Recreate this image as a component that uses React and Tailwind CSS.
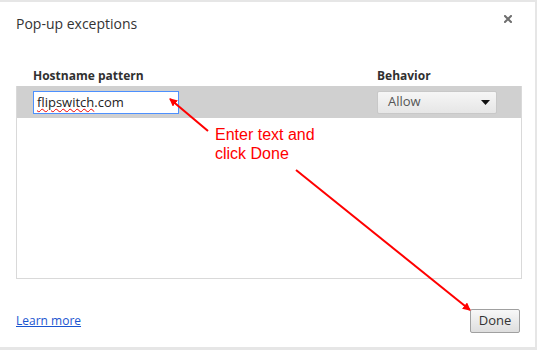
import { useState } from 'react';

// Small down-pointing caret used in the select box
const Caret = () => (
  <svg width="9" height="5" viewBox="0 0 9 5" className="block">
    <path d="M0 0 L9 0 L4.5 5 Z" fill="#111" />
  </svg>
);

const CloseX = () => (
  <svg width="8" height="8" viewBox="0 0 8 8" className="block">
    <path d="M1 1 L7 7 M7 1 L1 7" stroke="#6f6f6f" strokeWidth="2" strokeLinecap="square" />
  </svg>
);

function App() {
  const [behavior] = useState('Allow');

  return (
    <div className="relative w-[537px] h-[350px] bg-[#e6e6e6] overflow-hidden" style={{ fontFamily: '"Open Sans", "Noto Sans", sans-serif' }}>
      <div className="absolute left-0 top-[2px] w-[535px] h-[345px] bg-white flex flex-col">
        {/* Title bar */}
        <div className="flex items-start justify-between pl-4 pr-[23px] pt-[12px]">
          <h1 className="text-[14px] text-[#333] leading-[20px]">Pop-up exceptions</h1>
          <button className="mt-[1px]"><CloseX /></button>
        </div>

        {/* Column headers */}
        <div className="flex mt-[34px] text-[12px] font-bold text-[#303030] leading-[16px]">
          <div className="w-[377px] pl-[33px]">Hostname pattern</div>
          <div>Behavior</div>
        </div>

        {/* List */}
        <div className="ml-4 mt-[2px] w-[506px] h-[193px] border-x border-b border-[#d9d9d9]">
          <div className="flex items-center h-[32px] bg-[#d0d0d0]">
            <div className="w-[360px] pl-[16px]">
              <div className="w-[146px] h-[23px] px-[3px] flex items-center bg-white border border-[#4d90fe] text-[13px] text-[#222] leading-none">
                <span className="underline decoration-wavy decoration-[#e00] decoration-[1px] underline-offset-[1px]">flipswitch</span>
                <span>.com</span>
              </div>
            </div>
            <div className="w-[120px] h-[23px] flex items-center justify-between pl-[10px] pr-[6px] rounded-[2px] border border-[#c8c8c8] bg-gradient-to-b from-[#f6f6f6] to-[#e6e6e6] text-[13px] text-[#555]">
              <span>{behavior}</span>
              <Caret />
            </div>
          </div>
        </div>

        {/* Footer */}
        <div className="flex items-center justify-between pl-4 pr-[15px] mt-[30px]">
          <a href="#" className="text-[12px] text-[#1a55d0] underline">Learn more</a>
          <button className="w-[50px] h-[24px] rounded-[2px] border border-[#a0a0a0] bg-gradient-to-b from-[#f8f8f8] to-[#dedede] text-[13px] text-[#333]">Done</button>
        </div>
      </div>

      {/* Annotation overlay */}
      <svg className="absolute inset-0 pointer-events-none" width="537" height="350">
        <defs>
          <marker id="ah" markerWidth="8" markerHeight="8" refX="7" refY="4" orient="auto" markerUnits="userSpaceOnUse">
            <path d="M0 0 L8 4 L0 8 Z" fill="#ff0000" />
          </marker>
        </defs>
        <line x1="208" y1="131" x2="170" y2="99" stroke="#ff0000" strokeWidth="2" markerEnd="url(#ah)" />
        <line x1="296" y1="170" x2="470" y2="310" stroke="#ff0000" strokeWidth="2" markerEnd="url(#ah)" />
      </svg>
      <div className="absolute left-[215px] top-[125px] text-[16px] leading-[19px] text-[#ff0000]" style={{ fontFamily: '"Liberation Sans", Arial, sans-serif' }}>
        Enter text and<br />click Done
      </div>
    </div>
  );
}

export default App;
